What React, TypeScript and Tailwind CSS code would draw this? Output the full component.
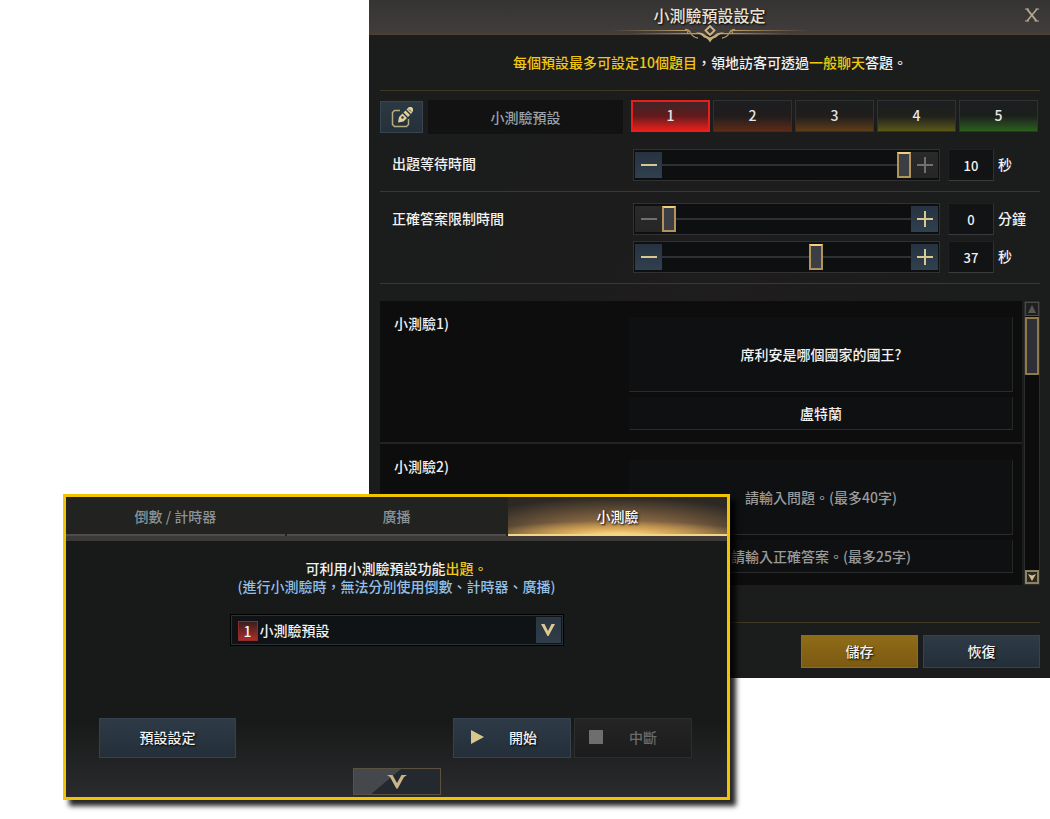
import { useState } from "react"
import clsx from "clsx"

const presets = [
  { id: 1, glow: "from-[#3f2426] via-[#62191c] to-[#e81b17]" },
  { id: 2, glow: "from-[#1c1d20] via-[#211c1c] to-[#5c2b16]" },
  { id: 3, glow: "from-[#1c1d20] via-[#201d1b] to-[#5e3d15]" },
  { id: 4, glow: "from-[#1c1d20] via-[#20201b] to-[#5b5814]" },
  { id: 5, glow: "from-[#1c1d20] via-[#1b201b] to-[#2b611b]" },
]

const quizzes = [
  { id: 1, question: "席利安是哪個國家的國王?", answer: "盧特蘭" },
  { id: 2, question: "", answer: "" },
]

const tabs = ["倒數 / 計時器", "廣播", "小測驗"]

function Divider() {
  return <div className="h-px bg-[#3f3822]" />
}

function EditIcon() {
  return (
    <svg width="24" height="24" viewBox="0 0 24 24" fill="none" aria-hidden="true">
      <path d="M10 5.500H4.500L2.500 7.500v12L4.500 21.500h12l2-2V14" stroke="#b9ab7c" strokeWidth="1.500" />
      <path d="M8 17.500l1-5.500 3.500-3.500 4.500 4.500-3.500 3.500z" fill="#e0d09a" />
      <path d="M13.500 7.500l2-2 4.500 4.500-2 2z" fill="#e0d09a" />
      <path d="M16.500 4.500L19 2h2.500L23 3.500V6l-2 3z" fill="#e0d09a" />
      <circle cx="12.500" cy="12.500" r="1.200" fill="#27343f" />
      <path d="M19 4.500l2 2" stroke="#27343f" />
    </svg>
  )
}

function CloseIcon() {
  return (
    <svg width="16" height="14" viewBox="0 0 16 14" fill="none" stroke="#b5a98c" aria-hidden="true">
      <path d="M3 1l9.500 12" strokeWidth="2" />
      <path d="M13 1L3 13" strokeWidth="1.500" />
      <path d="M1 1h4M11.500 1H15M1 13h4M10.500 13H15" strokeWidth="1.200" />
    </svg>
  )
}

function Ornament() {
  return (
    <svg width="220" height="18" viewBox="0 0 220 18" fill="none" aria-hidden="true">
      <defs>
        <linearGradient id="line-left" x1="0" x2="1">
          <stop offset="0" stopColor="#a8895a" stopOpacity="0" />
          <stop offset="1" stopColor="#c2a673" />
        </linearGradient>
        <linearGradient id="line-right" x1="1" x2="0">
          <stop offset="0" stopColor="#a8895a" stopOpacity="0" />
          <stop offset="1" stopColor="#c2a673" />
        </linearGradient>
      </defs>
      <rect x="10" y="5" width="78" height="1" fill="url(#line-left)" />
      <rect x="30" y="8" width="70" height="1" fill="url(#line-left)" />
      <rect x="132" y="5" width="78" height="1" fill="url(#line-right)" />
      <rect x="120" y="8" width="70" height="1" fill="url(#line-right)" />
      <path d="M110 1l4.500 4.500L110 10l-4.500-4.500z" fill="#3b3938" stroke="#d0b688" strokeWidth="1.800" />
      <path d="M96 7.500c5 0 7 .5 9 2.500l5 2.500 5-2.500c2-2 4-2.500 9-2.500-4 1.500-6 3-8 5-2.500.5-4.500 2-6 5-1.500-3-3.500-4.500-6-5-2-2-4-3.500-8-5z" fill="#c9ae7d" />
      <path d="M85 4.500c4 0 5 2 6 4s3 4 7 4.500M88 9c-1-2 0-4 2-3M135 4.500c-4 0-5 2-6 4s-3 4-7 4.500M132 9c1-2 0-4-2-3" stroke="#b0935f" strokeWidth="1.300" />
    </svg>
  )
}

function StepButton({ sign, label, disabled, onClick }: { sign: "-" | "+"; label: string; disabled: boolean; onClick: () => void }) {
  return (
    <button
      type="button"
      aria-label={label}
      disabled={disabled}
      onClick={onClick}
      className="flex w-[27px] shrink-0 items-center justify-center bg-gradient-to-b from-[#26323f] to-[#31404f] text-[#d8c88f] disabled:from-[#2a2a2b] disabled:to-[#262627] disabled:text-[#707070]"
    >
      <svg width="16" height="16" viewBox="0 0 16 16" fill="currentColor" aria-hidden="true">
        <path d="M0 7h16v2H0z" />
        {sign === "+" && <path d="M7 0h2v16H7z" />}
      </svg>
    </button>
  )
}

interface TimeSliderProps {
  label: string
  unit: string
  max: number
  initial: number
}

function TimeSlider({ label, unit, max, initial }: TimeSliderProps) {
  const [value, setValue] = useState(initial)

  return (
    <div className="flex h-8 items-center">
      <div className="flex h-8 w-[307px] border border-[#303132] bg-[#0e0f10] py-0.5 px-px">
        <StepButton sign="-" label={`${label} -`} disabled={value === 0} onClick={() => setValue(value - 1)} />
        <input
          type="range"
          aria-label={label}
          min={0}
          max={max}
          value={value}
          onChange={(e) => setValue(Number(e.target.value))}
          className="h-full min-w-0 flex-1 cursor-pointer appearance-none bg-[linear-gradient(#2c3135,#2c3135)] bg-[length:100%_2px] bg-center bg-no-repeat [&::-webkit-slider-thumb]:h-[26px] [&::-webkit-slider-thumb]:w-3.5 [&::-webkit-slider-thumb]:appearance-none [&::-webkit-slider-thumb]:border-2 [&::-webkit-slider-thumb]:border-[#b3935a] [&::-webkit-slider-thumb]:border-t-[#f0cf7c] [&::-webkit-slider-thumb]:bg-[#3b3f45]"
        />
        <StepButton sign="+" label={`${label} +`} disabled={value === max} onClick={() => setValue(value + 1)} />
      </div>
      <label className="ml-2 flex items-center gap-1 leading-[30px]">
        <input
          value={value}
          inputMode="numeric"
          onChange={(e) => setValue(Math.min(max, Number(e.target.value) || 0))}
          className="h-8 w-[46px] border border-[#1f2021] border-r-[#303132] border-b-[#3a3b3c] bg-[#121315] text-center text-[13px]"
        />
        <span className="pb-0.5">{unit}</span>
      </label>
    </div>
  )
}

function QuizItem({ quiz }: { quiz: (typeof quizzes)[number] }) {
  const field =
    "block w-full resize-none border border-[#101112] border-r-[#242627] border-b-[#2b2c2d] bg-[#0e1012] text-center leading-5 placeholder:text-[#9a9a9a]"

  return (
    <li className="flex justify-between border-b-2 border-[#222323] pt-4 pr-[9px] pb-3 pl-3.5 last:border-b-0">
      <h3 className="-mt-1 leading-5">小測驗{quiz.id})</h3>
      <div className="w-[384px]">
        <textarea
          aria-label={`小測驗${quiz.id} 問題`}
          maxLength={40}
          defaultValue={quiz.question}
          placeholder="請輸入問題。(最多40字)"
          className={clsx(field, "mb-[5px] h-[75px] pt-[26px]")}
        />
        <input
          aria-label={`小測驗${quiz.id} 正確答案`}
          maxLength={25}
          defaultValue={quiz.answer}
          placeholder="請輸入正確答案。(最多25字)"
          className={clsx(field, "h-[33px] pb-0.5")}
        />
      </div>
    </li>
  )
}

function ScrollBar() {
  return (
    <div className="ml-0.5 flex w-4 flex-col border border-[#2c2d2d] bg-[#0c0c0c]">
      <button type="button" aria-label="上" className="flex h-3.5 items-center justify-center border border-[#4b4a48] bg-[#202020]">
        <svg width="8" height="8" viewBox="0 0 8 8" fill="#595753" aria-hidden="true">
          <path d="M4 0l4 8H0z" />
        </svg>
      </button>
      <div className="mt-px h-[58px] border-2 border-[#92794b] bg-[#2d3137]" />
      <button type="button" aria-label="下" className="mt-auto flex h-3.5 items-center justify-center border-2 border-[#8f8363] bg-[#2a2823]">
        <svg width="8" height="7" viewBox="0 0 8 7" fill="#d3c189" aria-hidden="true">
          <path d="M0 0l4 1.500L8 0 4 7z" />
        </svg>
      </button>
    </div>
  )
}

function PresetDialog() {
  const [preset, setPreset] = useState(1)

  return (
    <section
      aria-labelledby="preset-title"
      className="ml-[369px] bg-[#1b1c1c] bg-[radial-gradient(ellipse_at_50%_45%,#1f1d1d,#1b1c1c_60%)] pb-2.5"
    >
      <header className="relative flex h-[35px] items-center justify-center border-b-2 border-[#4c3f2b] bg-gradient-to-b from-[#363433] to-[#403d3c] pb-1">
        <h2 id="preset-title" className="text-base font-medium text-[#e9e2d0] [text-shadow:1px_1px_2px_#000]">
          小測驗預設設定
        </h2>
        <button type="button" aria-label="關閉" className="absolute top-2 right-2.5">
          <CloseIcon />
        </button>
        <div className="absolute -bottom-2.5 left-1/2 -translate-x-1/2">
          <Ornament />
        </div>
      </header>

      <div className="pr-2.5 pl-[11px]">
        <p className="flex h-[55px] items-center justify-center pb-0.5">
          <span>
            <span className="text-[#f0c814]">每個預設最多可設定10個題目</span>，領地訪客可透過
            <span className="text-[#f0c814]">一般聊天</span>答題。
          </span>
        </p>
        <Divider />

        <div className="mt-[9px] mb-[15px] flex h-[34px] items-end">
          <button
            type="button"
            aria-label="編輯"
            className="mr-[5px] flex h-8 w-[43px] items-center justify-center self-center border border-[#36454f] bg-gradient-to-b from-[#2c3943] to-[#24303a]"
          >
            <EditIcon />
          </button>
          <input
            aria-label="預設名稱"
            defaultValue="小測驗預設"
            className="h-[34px] min-w-0 flex-1 bg-[#121213] text-center text-[#9aa3aa]"
          />
          <div className="ml-2 grid w-[409px] grid-cols-5 gap-[3px] self-start pr-0.5">
            {presets.map((p) => (
              <button
                key={p.id}
                type="button"
                aria-pressed={preset === p.id}
                onClick={() => setPreset(p.id)}
                className={clsx(
                  "h-8 border bg-gradient-to-b pb-0.5 text-[#e6e6e6]",
                  p.glow,
                  preset === p.id ? "border-2 border-[#e8201c]" : "border-[#303132]"
                )}
              >
                {p.id}
              </button>
            ))}
          </div>
        </div>

        <div className="mb-2.5 flex justify-between">
          <h3 className="pl-3 leading-7">出題等待時間</h3>
          <div className="w-[407px]">
            <TimeSlider label="出題等待時間" unit="秒" max={10} initial={10} />
          </div>
        </div>
        <Divider />

        <div className="mt-[11px] mb-2.5 flex justify-between">
          <h3 className="pl-3 leading-[30px]">正確答案限制時間</h3>
          <div className="flex w-[407px] flex-col gap-1.5">
            <TimeSlider label="正確答案限制時間 分鐘" unit="分鐘" max={10} initial={0} />
            <TimeSlider label="正確答案限制時間 秒" unit="秒" max={59} initial={37} />
          </div>
        </div>
        <Divider />

        <div className="mt-[17px] mb-[37px] flex">
          <ul className="flex-1 bg-[#0d0d0d]">
            {quizzes.map((quiz) => (
              <QuizItem key={quiz.id} quiz={quiz} />
            ))}
          </ul>
          <ScrollBar />
        </div>
        <Divider />

        <div className="mt-3 flex justify-end gap-[5px]">
          <button
            type="button"
            className="h-[33px] w-[117px] border border-[#8a6f22] bg-gradient-to-b from-[#8f6c18] to-[#7c5a11] pb-0.5 [text-shadow:1px_1px_2px_#000]"
          >
            儲存
          </button>
          <button
            type="button"
            className="h-[33px] w-[117px] border border-[#354350] bg-gradient-to-b from-[#2e3b47] to-[#232e38] pb-0.5 [text-shadow:1px_1px_2px_#000]"
          >
            恢復
          </button>
        </div>
      </div>
    </section>
  )
}

function QuizPanel() {
  const [tab, setTab] = useState("小測驗")

  return (
    <section
      aria-label="小測驗"
      className="absolute top-[494px] left-[63px] w-[667px] border-3 border-[#f0c400] bg-gradient-to-b from-[#181a19] from-75% to-[#2b2b2e] shadow-[6px_6px_5px_rgba(0,0,0,0.85)]"
    >
      <div role="tablist" className="grid grid-cols-3 gap-0.5 border-b-5 border-[#3d3937] bg-[#222220]">
        {tabs.map((name) => (
          <button
            key={name}
            type="button"
            role="tab"
            aria-selected={tab === name}
            onClick={() => setTab(name)}
            className={clsx(
              "h-[39px] border-b-2",
              tab === name
                ? "border-[#f3d58a] bg-[radial-gradient(ellipse_62%_40%_at_50%_104%,#ffe68f,rgba(240,190,95,0.7)_45%,transparent),radial-gradient(ellipse_75%_100%_at_50%_100%,#b98a50,#7d6040_45%,#2c2824)] text-white [text-shadow:1px_1px_2px_#000]"
                : "border-[#4b4d52] text-[#8b9298]"
            )}
          >
            {name}
          </button>
        ))}
      </div>

      <p className="mt-[18px] text-center leading-[18px]">
        可利用小測驗預設功能<span className="text-[#f0c814]">出題。</span>
        <br />
        <span className="text-[#94bfe6]">(進行小測驗時，無法分別使用倒數、計時器、廣播)</span>
      </p>

      <div className="relative mx-auto mt-5 w-[332px]">
        <select
          aria-label="小測驗預設"
          className="block h-[30px] w-full appearance-none border border-[#2a3138] bg-[#0f1316] pl-7 outline outline-black"
        >
          <option>小測驗預設</option>
        </select>
        <span className="pointer-events-none absolute top-1.5 left-[7px] flex size-5 items-center justify-center border border-[#8e2b28] bg-gradient-to-b from-[#3a1d1d] to-[#b02a27]">
          1
        </span>
        <span className="pointer-events-none absolute top-0.5 right-0.5 flex h-[26px] w-[25px] items-center justify-center bg-gradient-to-b from-[#2a3642] to-[#303c48]">
          <svg width="14" height="12" viewBox="0 0 14 12" fill="#dccb91" aria-hidden="true">
            <path d="M0 0h3.500L7 7l3.500-7H14L7.500 12h-1z" />
          </svg>
        </span>
      </div>

      <div className="mt-[73px] flex gap-[3px] pr-[35px] pl-[33px]">
        <button
          type="button"
          className="mr-auto h-10 w-[137px] border border-[#34434f] bg-gradient-to-b from-[#2e3b47] to-[#232e38] pb-0.5 [text-shadow:1px_1px_2px_#000]"
        >
          預設設定
        </button>
        <button
          type="button"
          className="flex h-10 w-[118px] items-center border border-[#34434f] bg-gradient-to-b from-[#2e3b47] to-[#232e38] pb-0.5 pl-[17px] [text-shadow:1px_1px_2px_#000]"
        >
          <svg width="14" height="14" viewBox="0 0 14 14" fill="#d8c88c" aria-hidden="true">
            <path d="M0 0l13 7L0 14z" />
          </svg>
          <span className="pl-6">開始</span>
        </button>
        <button
          type="button"
          disabled
          className="flex h-10 w-[118px] items-center border border-[#2d2d2d] bg-gradient-to-b from-[#242424] to-[#1c1c1c] pb-0.5 pl-3.5 text-[#6b6b6b]"
        >
          <span className="size-3.5 bg-[#6d6e6d]" />
          <span className="pl-[26px]">中斷</span>
        </button>
      </div>

      <button
        type="button"
        aria-label="展開"
        className="mx-auto mt-2.5 mb-0.5 flex h-[27px] w-[88px] items-center justify-center border border-[#5a523f] bg-[linear-gradient(140deg,#44484c_40%,#24292f_41%)]"
      >
        <svg width="20" height="14" viewBox="0 0 20 14" fill="#c9b48a" aria-hidden="true">
          <path d="M0 0h5.500L10 8l4.500-8H20l-3 2-6 11-1 1-1-1L3 2z" />
        </svg>
      </button>
    </section>
  )
}

export default function App() {
  return (
    <main
      lang="zh-Hant"
      className="relative min-h-screen bg-white font-['Noto_Sans_CJK_TC',sans-serif] text-sm font-medium text-[#f2f2f2]"
    >
      <PresetDialog />
      <QuizPanel />
    </main>
  )
}
